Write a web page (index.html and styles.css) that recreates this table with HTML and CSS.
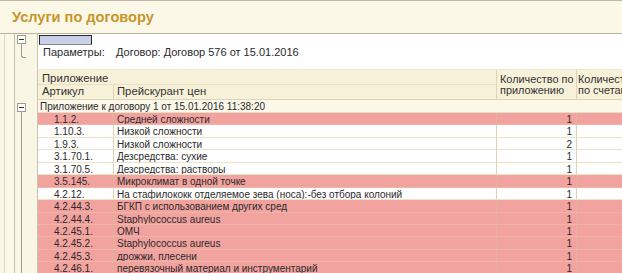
FILE: index.html
```html
<!DOCTYPE html>
<html lang="ru">
<head>
<meta charset="utf-8">
<title>Услуги по договору</title>
<link rel="stylesheet" href="styles.css">
</head>
<body>
<div class="window">
  <div class="titlebar"><h1 class="title">Услуги по договору</h1></div>
  <div class="body">
    <div class="panel">
      <section class="sec sec-params">
        <div class="gutter"><span class="toggle"></span><span class="branch"></span></div>
        <div class="params">
          <div class="field"></div>
          <div class="param-line"><span class="param-label">Параметры:</span><span class="param-value">Договор: Договор 576 от 15.01.2016</span></div>
        </div>
      </section>
      <section class="sec sec-head">
        <div class="gutter"></div>
        <div class="thead">
          <div class="th th-app">Приложение</div>
          <div class="th th-qty">Количество по<br>приложению</div>
          <div class="th th-qty2">Количество<br>по счетам</div>
          <div class="th th-art">Артикул</div>
          <div class="th th-name">Прейскурант цен</div>
        </div>
      </section>
      <section class="sec sec-rows">
        <div class="gutter"><span class="toggle toggle-group"></span><span class="trunk"></span></div>
        <div class="tbody">
          <div class="group-row">Приложение к договору 1 от 15.01.2016 11:38:20</div>
          <div class="row row-alert"><span class="td td-art">1.1.2.</span><span class="td td-name">Средней сложности</span><span class="td td-qty">1</span><span class="td td-qty2"></span></div>
          <div class="row"><span class="td td-art">1.10.3.</span><span class="td td-name">Низкой сложности</span><span class="td td-qty">1</span><span class="td td-qty2"></span></div>
          <div class="row"><span class="td td-art">1.9.3.</span><span class="td td-name">Низкой сложности</span><span class="td td-qty">2</span><span class="td td-qty2"></span></div>
          <div class="row"><span class="td td-art">3.1.70.1.</span><span class="td td-name">Дезсредства: сухие</span><span class="td td-qty">1</span><span class="td td-qty2"></span></div>
          <div class="row"><span class="td td-art">3.1.70.5.</span><span class="td td-name">Дезсредства: растворы</span><span class="td td-qty">1</span><span class="td td-qty2"></span></div>
          <div class="row row-alert"><span class="td td-art">3.5.145.</span><span class="td td-name">Микроклимат в одной точке</span><span class="td td-qty">1</span><span class="td td-qty2"></span></div>
          <div class="row"><span class="td td-art">4.2.12.</span><span class="td td-name">На стафилококк отделяемое зева (носа):-без отбора колоний</span><span class="td td-qty">1</span><span class="td td-qty2"></span></div>
          <div class="row row-alert"><span class="td td-art">4.2.44.3.</span><span class="td td-name">БГКП с использованием других сред</span><span class="td td-qty">1</span><span class="td td-qty2"></span></div>
          <div class="row row-alert"><span class="td td-art">4.2.44.4.</span><span class="td td-name">Staphylococcus aureus</span><span class="td td-qty">1</span><span class="td td-qty2"></span></div>
          <div class="row row-alert"><span class="td td-art">4.2.45.1.</span><span class="td td-name">ОМЧ</span><span class="td td-qty">1</span><span class="td td-qty2"></span></div>
          <div class="row row-alert"><span class="td td-art">4.2.45.2.</span><span class="td td-name">Staphylococcus aureus</span><span class="td td-qty">1</span><span class="td td-qty2"></span></div>
          <div class="row row-alert"><span class="td td-art">4.2.45.3.</span><span class="td td-name">дрожжи, плесени</span><span class="td td-qty">1</span><span class="td td-qty2"></span></div>
          <div class="row row-alert"><span class="td td-art">4.2.46.1.</span><span class="td td-name">перевязочный материал и инструментарий</span><span class="td td-qty">1</span><span class="td td-qty2"></span></div>
        </div>
      </section>
    </div>
  </div>
</div>
</body>
</html>
```
FILE: styles.css
```css
* { box-sizing: border-box; }
html, body { margin: 0; padding: 0; }
body {
  width: 622px;
  height: 273px;
  overflow: hidden;
  background: #fbf8e8;
  font-family: "Liberation Sans", Arial, sans-serif;
  color: #2a2a2a;
}
.window {
  border-top: 1px solid #bdb9a6;
}
.titlebar {
  height: 33px;
  padding: 8px 0 0 12px;
  border-bottom: 1px solid #b8b4a1;
  background: #fbf8e8;
}
.title {
  margin: 0;
  font-size: 14.6px;
  line-height: 16px;
  font-weight: bold;
  color: #c8952c;
}
.body {
  margin-left: 4px;
  border-left: 1px solid #dcd8c4;
  padding-left: 9px;
}
.panel {
  border-left: 1px solid #c4c0ab;
}
.sec {
  display: flex;
}
.gutter {
  width: 22px;
  flex: none;
  display: flex;
  flex-direction: column;
  background: #f9f6e6;
}
.toggle {
  display: block;
  width: 9px;
  height: 9px;
  margin: 1px 0 0 2px;
  border: 1px solid #9c9c94;
  background: #fff;
  position: relative;
}
.toggle::after {
  content: "";
  position: absolute;
  left: 1px;
  top: 3px;
  width: 5px;
  height: 1px;
  background: #333;
}
.branch {
  display: block;
  width: 5px;
  height: 14px;
  margin-left: 6px;
  border-left: 1px solid #9c9c94;
  border-bottom: 1px solid #9c9c94;
  border-bottom-left-radius: 3px;
}
.toggle-group { margin-top: 3px; }
.trunk {
  display: block;
  flex: 1;
  margin-left: 6px;
  border-left: 1px solid #9c9c94;
}

/* params */
.params {
  flex: 1;
  height: 35px;
  background: #fff;
  border-left: 1px solid #c9c4ad;
  padding: 1px 0 0 1px;
}
.field {
  width: 53px;
  height: 10px;
  border: 1px solid #2a2a2a;
  border-bottom-color: #8a8a8a;
  background: #c9d0e8;
}
.param-line {
  margin-top: 1px;
  padding-left: 4px;
  font-size: 11px;
  line-height: 13px;
  display: flex;
}
.param-label { width: 73px; }

/* header */
.thead {
  flex: 1;
  min-width: 0;
  display: grid;
  grid-template-columns: 76px 383px 80px 80px;
  grid-template-rows: 15px 14px;
  background: #f6f1d8;
  border-left: 1px solid #c9c4ad;
  border-top: 1px solid #efe9cf;
  border-bottom: 1px solid #ddd5b5;
  font-size: 11.3px;
  line-height: 11px;
  color: #333;
}
.th {
  white-space: nowrap;
  overflow: hidden;
  border-right: 1px solid #ddd5b5;
}
.th-app {
  grid-column: 1 / 3;
  grid-row: 1;
  padding: 3px 0 0 4px;
  border-bottom: 1px solid #e6dfc2;
}
.th-art { grid-column: 1; grid-row: 2; padding: 1px 0 0 4px; }
.th-name { grid-column: 2; grid-row: 2; padding: 1px 0 0 3px; }
.th-qty {
  grid-column: 3;
  grid-row: 1 / 3;
  padding: 4px 0 0 3px;
  font-size: 10.9px;
}
.th-qty2 {
  grid-column: 4;
  grid-row: 1 / 3;
  padding: 4px 0 0 1px;
  font-size: 10.9px;
  border-right: 0;
}

/* rows */
.tbody {
  flex: 1;
  border-left: 1px solid #c9c4ad;
  font-size: 10px;
  line-height: 11px;
  overflow: hidden;
}
.group-row {
  height: 13px;
  padding: 1px 0 0 2px;
  background: #fbf8ea;
  border-bottom: 1px solid #e6dfc2;
  white-space: nowrap;
}
.row {
  display: grid;
  grid-template-columns: 76px 383px 80px 1fr;
  height: 12.45px;
  background: #fff;
  border-bottom: 1px solid #ebe4c8;
  white-space: nowrap;
}
.row-alert {
  background: #f3a39f;
  border-bottom-color: #eeb7a5;
}
.td {
  display: block;
  overflow: hidden;
  padding-top: 1px;
  border-right: 1px solid #dcd3b2;
}
.row-alert .td { border-right-color: #deb49e; }
.td-art { padding-left: 16px; }
.td-name { padding-left: 3px; }
.td-qty { text-align: right; padding-right: 4px; }
.td-qty2 { border-right: 0; }
```
